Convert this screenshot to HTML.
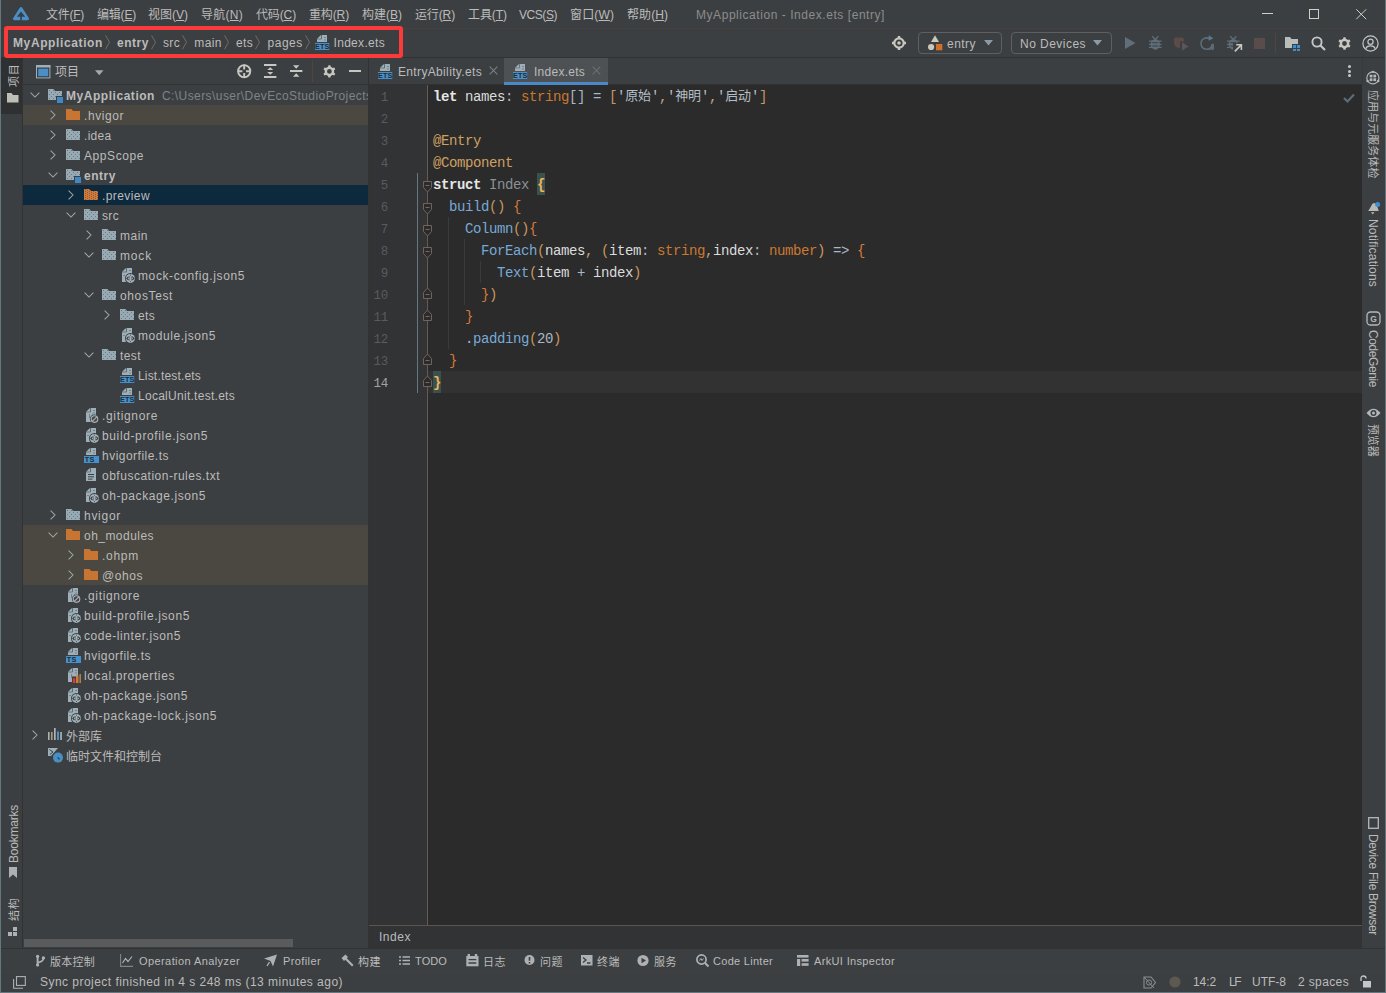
<!DOCTYPE html>
<html><head><meta charset="utf-8"><title>MyApplication - Index.ets [entry]</title>
<style>
html,body{margin:0;padding:0;background:#3c3f41;}
body{width:1386px;height:993px;position:relative;overflow:hidden;font-family:"Liberation Sans","Noto Sans CJK SC",sans-serif;font-size:12px;color:#bbbbbb;}
.t{position:absolute;white-space:pre;line-height:20px;height:20px;}
.m{font-family:"Liberation Mono","Noto Sans CJK SC",monospace;font-size:14px;letter-spacing:-0.4px;}
.c{position:relative}
.v{position:absolute;white-space:pre;line-height:20px;height:20px;transform-origin:0 0;}
svg{overflow:visible}
</style></head><body>
<div style="position:absolute;left:0px;top:0px;width:1386px;height:993px;background:#3c3f41;"></div>
<svg width="0" height="0" style="position:absolute"><defs><pattern id="dg" width="4" height="4" patternUnits="userSpaceOnUse"><rect width="4" height="4" fill="#98abb5"/><rect x="1" y="1" width="1" height="1" fill="#6b7b85"/><rect x="3" y="3" width="1" height="1" fill="#6b7b85"/></pattern><pattern id="do" width="4" height="2" patternUnits="userSpaceOnUse"><rect width="4" height="2" fill="#d27a3a"/><rect x="1" y="0" width="1" height="1" fill="#8a5a3a"/><rect x="3" y="1" width="1" height="1" fill="#8a5a3a"/></pattern></defs></svg>
<svg style="position:absolute;left:12px;top:6px" width="18" height="16" viewBox="0 0 18 16"><path d="M9 2.5 L2.4 12.8 L15.6 12.8 Z" fill="#4b8fc9" stroke="#4b8fc9" stroke-width="2.8" stroke-linejoin="round"/><path d="M9 5.6 L4.8 10.8 L13.2 10.8 Z" fill="#3c3f41"/><rect x="8.2" y="8" width="1.6" height="7.5" fill="#3c3f41"/></svg>
<span id="t1" class="t " style="left:46px;top:5px;letter-spacing:-0.272px;"><span class="c" style="top:-0.5px">文件</span>(<u>F</u>)</span>
<span id="t2" class="t " style="left:97px;top:5px;letter-spacing:-0.206px;"><span class="c" style="top:-0.5px">编辑</span>(<u>E</u>)</span>
<span id="t3" class="t " style="left:148px;top:5px;letter-spacing:-0.006px;"><span class="c" style="top:-0.5px">视图</span>(<u>V</u>)</span>
<span id="t4" class="t " style="left:201px;top:5px;letter-spacing:0.263px;"><span class="c" style="top:-0.5px">导航</span>(<u>N</u>)</span>
<span id="t5" class="t " style="left:256px;top:5px;letter-spacing:-0.138px;"><span class="c" style="top:-0.5px">代码</span>(<u>C</u>)</span>
<span id="t6" class="t " style="left:309px;top:5px;letter-spacing:-0.138px;"><span class="c" style="top:-0.5px">重构</span>(<u>R</u>)</span>
<span id="t7" class="t " style="left:362px;top:5px;letter-spacing:-0.006px;"><span class="c" style="top:-0.5px">构建</span>(<u>B</u>)</span>
<span id="t8" class="t " style="left:415px;top:5px;letter-spacing:-0.138px;"><span class="c" style="top:-0.5px">运行</span>(<u>R</u>)</span>
<span id="t9" class="t " style="left:468px;top:5px;letter-spacing:-0.072px;"><span class="c" style="top:-0.5px">工具</span>(<u>T</u>)</span>
<span id="t10" class="t " style="left:519px;top:5px;letter-spacing:-0.448px;">VCS(<u>S</u>)</span>
<span id="t11" class="t " style="left:570px;top:5px;letter-spacing:0.131px;"><span class="c" style="top:-0.5px">窗口</span>(<u>W</u>)</span>
<span id="t12" class="t " style="left:627px;top:5px;letter-spacing:0.062px;"><span class="c" style="top:-0.5px">帮助</span>(<u>H</u>)</span>
<span id="t13" class="t " style="left:696px;top:5px;color:#8c8c8c;letter-spacing:0.553px;">MyApplication - Index.ets [entry]</span>
<div style="position:absolute;left:1262px;top:13px;width:10.5px;height:1px;background:#d0d0c6;"></div>
<div style="position:absolute;left:1309px;top:9px;width:10px;height:10px;background:transparent;border:1px solid #d0d0c6;box-sizing:border-box;"></div>
<svg style="position:absolute;left:1355.5px;top:9px" width="10.5" height="10.5" viewBox="0 0 10.5 10.5"><path d="M0.3 0.3 L10.2 10.2 M10.2 0.3 L0.3 10.2" stroke="#d0d0c6" stroke-width="1" fill="none"/></svg>
<div style="position:absolute;left:0px;top:57px;width:1386px;height:1px;background:#323232;"></div>
<div style="position:absolute;left:0px;top:28px;width:1386px;height:1px;background:#46413f;"></div>
<span id="t14" class="t " style="left:13px;top:33px;font-weight:bold;letter-spacing:0.614px;">MyApplication</span>
<svg style="position:absolute;left:105.2px;top:35px" width="5" height="15" viewBox="0 0 5 15"><path d="M0.5 0.3 L4.5 7.2 L0.5 14.2" stroke="#716b68" stroke-width="1" fill="none"/></svg>
<span id="t15" class="t " style="left:117px;top:33px;font-weight:bold;letter-spacing:0.531px;">entry</span>
<svg style="position:absolute;left:151.2px;top:35px" width="5" height="15" viewBox="0 0 5 15"><path d="M0.5 0.3 L4.5 7.2 L0.5 14.2" stroke="#716b68" stroke-width="1" fill="none"/></svg>
<span id="t16" class="t " style="left:163px;top:33px;letter-spacing:0.333px;">src</span>
<svg style="position:absolute;left:182.3px;top:35px" width="5" height="15" viewBox="0 0 5 15"><path d="M0.5 0.3 L4.5 7.2 L0.5 14.2" stroke="#716b68" stroke-width="1" fill="none"/></svg>
<span id="t17" class="t " style="left:194.3px;top:33px;letter-spacing:0.371px;">main</span>
<svg style="position:absolute;left:224.3px;top:35px" width="5" height="15" viewBox="0 0 5 15"><path d="M0.5 0.3 L4.5 7.2 L0.5 14.2" stroke="#716b68" stroke-width="1" fill="none"/></svg>
<span id="t18" class="t " style="left:236px;top:33px;letter-spacing:0.328px;">ets</span>
<svg style="position:absolute;left:255px;top:35px" width="5" height="15" viewBox="0 0 5 15"><path d="M0.5 0.3 L4.5 7.2 L0.5 14.2" stroke="#716b68" stroke-width="1" fill="none"/></svg>
<span id="t19" class="t " style="left:267.5px;top:33px;letter-spacing:0.519px;">pages</span>
<svg style="position:absolute;left:304.8px;top:35px" width="5" height="15" viewBox="0 0 5 15"><path d="M0.5 0.3 L4.5 7.2 L0.5 14.2" stroke="#716b68" stroke-width="1" fill="none"/></svg>
<svg style="position:absolute;left:315.3px;top:34px" width="15" height="16" viewBox="0 0 15 16"><path d="M2 4.7 L6 1 L6 4.7 Z" fill="#9dafb8"/><path d="M6.6 1 H12 V8 H2 V5.3 H6.6 Z" fill="#9dafb8"/><rect x="9.5" y="3" width="1" height="1" fill="#4a555b"/><rect x="9.5" y="5.5" width="1" height="1" fill="#4a555b"/><rect x="0" y="9" width="14.2" height="7" fill="#4591cd"/><text x="7.2" y="15.3" font-family="Liberation Sans,sans-serif" font-size="7.3" font-weight="bold" fill="#2b2b28" text-anchor="middle" letter-spacing="0.1">ETS</text></svg>
<span id="t20" class="t " style="left:333.5px;top:33px;letter-spacing:0.311px;">Index.ets</span>
<div style="position:absolute;left:4px;top:26px;width:399px;height:32px;background:transparent;border:4px solid #fd3a3a;border-radius:3px;box-sizing:border-box;"></div>
<svg style="position:absolute;left:892px;top:36px" width="14" height="14" viewBox="0 0 14 14"><circle cx="7" cy="7" r="4.7" stroke="#c8c8be" stroke-width="2.2" fill="none"/><circle cx="7" cy="7" r="1.8" fill="#c8c8be"/><path d="M7 0 V2 M7 12 V14 M0 7 H2 M12 7 H14" stroke="#c8c8be" stroke-width="2.4"/></svg>
<div style="position:absolute;left:918px;top:32px;width:84px;height:22px;background:transparent;border:1px solid #5e6060;border-radius:4px;box-sizing:border-box;"></div>
<svg style="position:absolute;left:927px;top:35px" width="16" height="16" viewBox="0 0 16 16"><path d="M8 0.3 L12 7 L4 7 Z" fill="#c8c8bc"/><circle cx="4.1" cy="12" r="3.1" fill="#c8c8bc"/><rect x="9" y="9" width="6.3" height="6.3" fill="#d0702b"/></svg>
<span id="t21" class="t " style="left:947px;top:34px;letter-spacing:0.463px;">entry</span>
<svg style="position:absolute;left:984px;top:40px" width="10" height="6" viewBox="0 0 10 6"><path d="M0 0 L9 0 L4.5 5.5 Z" fill="#8b9aa6"/></svg>
<div style="position:absolute;left:1011px;top:32px;width:101px;height:22px;background:transparent;border:1px solid #5e6060;border-radius:4px;box-sizing:border-box;"></div>
<span id="t22" class="t " style="left:1020px;top:34px;letter-spacing:0.464px;">No Devices</span>
<svg style="position:absolute;left:1093px;top:40px" width="10" height="6" viewBox="0 0 10 6"><path d="M0 0 L9 0 L4.5 5.5 Z" fill="#8b9aa6"/></svg>
<svg style="position:absolute;left:1125px;top:37px" width="11" height="12" viewBox="0 0 11 12"><path d="M0 0 L10.5 6 L0 12 Z" fill="#5f6e79"/></svg>
<svg style="position:absolute;left:1149px;top:36px" width="13" height="14" viewBox="0 0 13 14"><path d="M3.2 0.3 L6.3 3.4 L9.4 0.3" stroke="#5f6e79" stroke-width="1.3" fill="none"/><path d="M0 5.2 H12.6 M0 8.3 H12.6 M0 11.4 H12.6" stroke="#5f6e79" stroke-width="1.3"/><ellipse cx="6.3" cy="8.3" rx="4.6" ry="5.4" fill="#5f6e79"/><path d="M3.3 6.7 H9.3 M3.3 10 H9.3" stroke="#3c3f41" stroke-width="1"/></svg>
<svg style="position:absolute;left:1174px;top:37px" width="15" height="14" viewBox="0 0 15 14"><path d="M1 0.5 H8 Q10 0.5 10 3 V4.5 L6 4.5 L6 11 H4.5 Q0 10 0 6 V1.5 Z" fill="#5b4b49"/><path d="M8 5.2 L14.6 9.4 L8 13.4 Z" fill="#5f5457"/></svg>
<svg style="position:absolute;left:1200px;top:35px" width="15" height="16" viewBox="0 0 15 16"><path d="M12.3 8.8 A5.7 5.7 0 1 1 9 3.4" stroke="#5f6e79" stroke-width="1.6" fill="none"/><path d="M8.6 0.2 L13.4 3.2 L8.6 5.8 Z" fill="#5b7890"/><path d="M8 14.8 L14 14.8 L14 8.6 Z" fill="#5f6a70"/></svg>
<svg style="position:absolute;left:1227px;top:36px" width="13" height="14" viewBox="0 0 13 14"><path d="M3.2 0.3 L6.3 3.4 L9.4 0.3" stroke="#5f6e79" stroke-width="1.3" fill="none"/><path d="M0 5.2 H12.6 M0 8.3 H12.6 M0 11.4 H12.6" stroke="#5f6e79" stroke-width="1.3"/><ellipse cx="6.3" cy="8.3" rx="4.6" ry="5.4" fill="#5f6e79"/><path d="M3.3 6.7 H9.3 M3.3 10 H9.3" stroke="#3c3f41" stroke-width="1"/></svg>
<svg style="position:absolute;left:1233px;top:42.5px" width="9.5" height="9.5" viewBox="0 0 9.5 9.5"><rect x="0" y="0" width="9.5" height="9.5" fill="#3c3f41"/><path d="M1.8 8.4 L7.6 2.6 M3.2 1.8 H8.4 V7" stroke="#c4c8c0" stroke-width="1.6" fill="none"/></svg>
<div style="position:absolute;left:1254px;top:38px;width:10.5px;height:10.5px;background:#594c4b;"></div>
<div style="position:absolute;left:1275px;top:33px;width:1px;height:20px;background:#52453f;"></div>
<svg style="position:absolute;left:1285px;top:36px" width="15" height="15" viewBox="0 0 15 15"><path d="M0 1 H5 L6.5 3 H13 V8 H7 V12 H0 Z" fill="#b9bdb9"/><rect x="8" y="9" width="3" height="3" fill="#3d8fd1"/><rect x="12" y="9" width="3" height="3" fill="#3d8fd1"/><rect x="8" y="13" width="3" height="2" fill="#3d8fd1"/><rect x="12" y="13" width="3" height="2" fill="#3d8fd1"/></svg>
<svg style="position:absolute;left:1311px;top:36px" width="15" height="15" viewBox="0 0 15 15"><circle cx="6" cy="6" r="4.6" stroke="#c4c6c8" stroke-width="1.9" fill="none"/><path d="M9.5 9.5 L14 14" stroke="#c4c6c8" stroke-width="2.2"/></svg>
<svg style="position:absolute;left:1338px;top:37px" width="13" height="13" viewBox="0 0 14 14"><circle cx="7" cy="7" r="3.9" stroke="#c6c7c0" stroke-width="2.6" fill="none"/><path d="M5.3 3 L5.9 0.2 H8.1 L8.7 3 Z" fill="#c6c7c0" transform="rotate(0 7 7)"/><path d="M5.3 3 L5.9 0.2 H8.1 L8.7 3 Z" fill="#c6c7c0" transform="rotate(60 7 7)"/><path d="M5.3 3 L5.9 0.2 H8.1 L8.7 3 Z" fill="#c6c7c0" transform="rotate(120 7 7)"/><path d="M5.3 3 L5.9 0.2 H8.1 L8.7 3 Z" fill="#c6c7c0" transform="rotate(180 7 7)"/><path d="M5.3 3 L5.9 0.2 H8.1 L8.7 3 Z" fill="#c6c7c0" transform="rotate(240 7 7)"/><path d="M5.3 3 L5.9 0.2 H8.1 L8.7 3 Z" fill="#c6c7c0" transform="rotate(300 7 7)"/></svg>
<svg style="position:absolute;left:1362px;top:35px" width="17" height="17" viewBox="0 0 17 17"><circle cx="8.5" cy="8.5" r="7.6" stroke="#c4c6c8" stroke-width="1.2" fill="none"/><circle cx="8.5" cy="6.8" r="2.6" stroke="#c4c6c8" stroke-width="1.2" fill="none"/><path d="M3.8 13.8 Q4.5 10.8 8.5 10.8 Q12.5 10.8 13.2 13.8" stroke="#c4c6c8" stroke-width="1.2" fill="none"/></svg>
<div style="position:absolute;left:1px;top:58px;width:21px;height:56px;background:#2e3032;"></div>
<div style="position:absolute;left:22px;top:58px;width:1px;height:891px;background:#323232;"></div>
<span id="t23" class="v" style="left:4px;top:87.3px;transform:rotate(-90deg);font-size:11px;letter-spacing:0.750px;">项目</span>
<svg style="position:absolute;left:7px;top:93px" width="12" height="10" viewBox="0 0 12 10"><path d="M0 0 H4.5 L6 2 H11.5 V9.5 H0 Z" fill="#bdbfb6"/></svg>
<span id="t24" class="v" style="left:4px;top:863px;transform:rotate(-90deg);letter-spacing:-0.226px;">Bookmarks</span>
<svg style="position:absolute;left:9px;top:867px" width="8" height="11" viewBox="0 0 8 11"><path d="M0 0 H8 V11 L4 7.5 L0 11 Z" fill="#aeb1b3"/></svg>
<span id="t25" class="v" style="left:4px;top:921px;transform:rotate(-90deg);font-size:11px;letter-spacing:0.750px;">结构</span>
<svg style="position:absolute;left:8px;top:927px" width="10" height="9" viewBox="0 0 10 9"><rect x="5" y="0" width="4" height="4" fill="#aeb1b3"/><rect x="0" y="5" width="4" height="4" fill="#aeb1b3"/><rect x="5" y="5" width="4" height="4" fill="#aeb1b3"/></svg>
<svg style="position:absolute;left:36px;top:65px" width="14.4" height="13.4" viewBox="0 0 14.4 13.4"><rect x="0.5" y="0.5" width="13.4" height="12.4" fill="#3c3f41" stroke="#9db0ba" stroke-width="1"/><rect x="0" y="0" width="14.4" height="2.5" fill="#9db0ba"/><rect x="2.2" y="3.7" width="10" height="7.5" fill="#4a90c8"/></svg>
<span id="t26" class="t " style="left:55px;top:61px;letter-spacing:-0.008px;"><span class="c" style="top:1px">项目</span></span>
<svg style="position:absolute;left:95px;top:69.8px" width="9" height="6" viewBox="0 0 9 6"><path d="M0 0.3 L8.5 0.3 L4.25 5.3 Z" fill="#a6a8aa"/></svg>
<svg style="position:absolute;left:237px;top:64px" width="14.4" height="14.4" viewBox="0 0 14.4 14.4"><circle cx="7.2" cy="7.2" r="6.1" stroke="#c6c7c0" stroke-width="1.9" fill="none"/><path d="M7.2 0.6 V5.4 M7.2 9 V13.8 M0.6 7.2 H5.4 M9 7.2 H13.8" stroke="#c6c7c0" stroke-width="1.9"/></svg>
<svg style="position:absolute;left:264px;top:64px" width="12.4" height="14" viewBox="0 0 12.4 14"><path d="M0 1 H12.4 M0 13 H12.4" stroke="#c6c7c0" stroke-width="2"/><path d="M6.2 3.2 L9.2 6 H3.2 Z M6.2 10.8 L9.2 8 H3.2 Z" fill="#c6c7c0"/></svg>
<svg style="position:absolute;left:290px;top:64px" width="12.4" height="14" viewBox="0 0 12.4 14"><path d="M0 7 H12.4" stroke="#c6c7c0" stroke-width="2"/><path d="M6.2 4.8 L9.4 1.2 H3 Z M6.2 9.2 L9.4 12.8 H3 Z" fill="#c6c7c0"/></svg>
<div style="position:absolute;left:312px;top:61px;width:1px;height:21px;background:#52453f;"></div>
<svg style="position:absolute;left:322.5px;top:64.5px" width="12.8" height="12.8" viewBox="0 0 14 14"><circle cx="7" cy="7" r="3.9" stroke="#c6c7c0" stroke-width="2.6" fill="none"/><path d="M5.3 3 L5.9 0.2 H8.1 L8.7 3 Z" fill="#c6c7c0" transform="rotate(0 7 7)"/><path d="M5.3 3 L5.9 0.2 H8.1 L8.7 3 Z" fill="#c6c7c0" transform="rotate(60 7 7)"/><path d="M5.3 3 L5.9 0.2 H8.1 L8.7 3 Z" fill="#c6c7c0" transform="rotate(120 7 7)"/><path d="M5.3 3 L5.9 0.2 H8.1 L8.7 3 Z" fill="#c6c7c0" transform="rotate(180 7 7)"/><path d="M5.3 3 L5.9 0.2 H8.1 L8.7 3 Z" fill="#c6c7c0" transform="rotate(240 7 7)"/><path d="M5.3 3 L5.9 0.2 H8.1 L8.7 3 Z" fill="#c6c7c0" transform="rotate(300 7 7)"/></svg>
<div style="position:absolute;left:349px;top:70px;width:12px;height:2px;background:#c6c7c0;"></div>
<div style="position:absolute;left:23px;top:84px;width:345px;height:1px;background:#323232;"></div>
<div style="position:absolute;left:368px;top:58px;width:1px;height:891px;background:#323232;"></div>
<div style="position:absolute;left:23px;top:105px;width:345px;height:20px;background:#4a4840;"></div>
<div style="position:absolute;left:23px;top:185px;width:345px;height:20px;background:#0d293e;"></div>
<div style="position:absolute;left:23px;top:525px;width:345px;height:20px;background:#4a4840;"></div>
<div style="position:absolute;left:23px;top:545px;width:345px;height:20px;background:#4a4840;"></div>
<div style="position:absolute;left:23px;top:565px;width:345px;height:20px;background:#4a4840;"></div>
<svg style="position:absolute;left:30px;top:92px" width="10" height="6" viewBox="0 0 10 6"><path d="M0.6 0.6 L5 5 L9.4 0.6" stroke="#9ca6ab" stroke-width="1.05" fill="none"/></svg>
<svg style="position:absolute;left:48px;top:89px" width="16" height="15" viewBox="0 0 16 15"><path d="M0 0 H5.5 L7 2 H14 V7 H8 V11 H0 Z" fill="url(#dg)"/><rect x="9" y="8" width="6" height="6" fill="#3d8ac6"/></svg>
<span id="t27" class="t " style="left:66px;top:86px;font-weight:bold;letter-spacing:0.537px;">MyApplication</span>
<div style="position:absolute;left:162px;top:85px;width:206px;height:20px;overflow:hidden"><span id="tpath" class="t" style="left:0;top:1px;color:#7f8386;letter-spacing:0.42px">C:\Users\user\DevEcoStudioProjects\MyApplication</span></div>
<svg style="position:absolute;left:50px;top:110px" width="6" height="10" viewBox="0 0 6 10"><path d="M0.6 0.6 L5 5 L0.6 9.4" stroke="#9ca6ab" stroke-width="1.05" fill="none"/></svg>
<svg style="position:absolute;left:66px;top:109px" width="14" height="11" viewBox="0 0 14 11"><path d="M0 0 H5.5 L7 2 H14 V11 H0 Z" fill="#c87533"/></svg>
<span id="t28" class="t " style="left:84px;top:106px;letter-spacing:0.567px;">.hvigor</span>
<svg style="position:absolute;left:50px;top:130px" width="6" height="10" viewBox="0 0 6 10"><path d="M0.6 0.6 L5 5 L0.6 9.4" stroke="#9ca6ab" stroke-width="1.05" fill="none"/></svg>
<svg style="position:absolute;left:66px;top:129px" width="14" height="11" viewBox="0 0 14 11"><path d="M0 0 H5.5 L7 2 H14 V11 H0 Z" fill="url(#dg)"/></svg>
<span id="t29" class="t " style="left:84px;top:126px;letter-spacing:0.294px;">.idea</span>
<svg style="position:absolute;left:50px;top:150px" width="6" height="10" viewBox="0 0 6 10"><path d="M0.6 0.6 L5 5 L0.6 9.4" stroke="#9ca6ab" stroke-width="1.05" fill="none"/></svg>
<svg style="position:absolute;left:66px;top:149px" width="14" height="11" viewBox="0 0 14 11"><path d="M0 0 H5.5 L7 2 H14 V11 H0 Z" fill="url(#dg)"/></svg>
<span id="t30" class="t " style="left:84px;top:146px;letter-spacing:0.576px;">AppScope</span>
<svg style="position:absolute;left:48px;top:172px" width="10" height="6" viewBox="0 0 10 6"><path d="M0.6 0.6 L5 5 L9.4 0.6" stroke="#9ca6ab" stroke-width="1.05" fill="none"/></svg>
<svg style="position:absolute;left:66px;top:169px" width="16" height="15" viewBox="0 0 16 15"><path d="M0 0 H5.5 L7 2 H14 V7 H8 V11 H0 Z" fill="url(#dg)"/><rect x="9" y="8" width="6" height="6" fill="#3d8ac6"/></svg>
<span id="t31" class="t " style="left:84px;top:166px;font-weight:bold;letter-spacing:0.531px;">entry</span>
<svg style="position:absolute;left:68px;top:190px" width="6" height="10" viewBox="0 0 6 10"><path d="M0.6 0.6 L5 5 L0.6 9.4" stroke="#9ca6ab" stroke-width="1.05" fill="none"/></svg>
<svg style="position:absolute;left:84px;top:189px" width="14" height="11" viewBox="0 0 14 11"><path d="M0 0 H5.5 L7 2 H14 V11 H0 Z" fill="url(#do)"/></svg>
<span id="t32" class="t " style="left:102px;top:186px;letter-spacing:0.414px;">.preview</span>
<svg style="position:absolute;left:66px;top:212px" width="10" height="6" viewBox="0 0 10 6"><path d="M0.6 0.6 L5 5 L9.4 0.6" stroke="#9ca6ab" stroke-width="1.05" fill="none"/></svg>
<svg style="position:absolute;left:84px;top:209px" width="14" height="11" viewBox="0 0 14 11"><path d="M0 0 H5.5 L7 2 H14 V11 H0 Z" fill="url(#dg)"/></svg>
<span id="t33" class="t " style="left:102px;top:206px;letter-spacing:0.333px;">src</span>
<svg style="position:absolute;left:86px;top:230px" width="6" height="10" viewBox="0 0 6 10"><path d="M0.6 0.6 L5 5 L0.6 9.4" stroke="#9ca6ab" stroke-width="1.05" fill="none"/></svg>
<svg style="position:absolute;left:102px;top:229px" width="14" height="11" viewBox="0 0 14 11"><path d="M0 0 H5.5 L7 2 H14 V11 H0 Z" fill="url(#dg)"/></svg>
<span id="t34" class="t " style="left:120px;top:226px;letter-spacing:0.496px;">main</span>
<svg style="position:absolute;left:84px;top:252px" width="10" height="6" viewBox="0 0 10 6"><path d="M0.6 0.6 L5 5 L9.4 0.6" stroke="#9ca6ab" stroke-width="1.05" fill="none"/></svg>
<svg style="position:absolute;left:102px;top:249px" width="14" height="11" viewBox="0 0 14 11"><path d="M0 0 H5.5 L7 2 H14 V11 H0 Z" fill="url(#dg)"/></svg>
<span id="t35" class="t " style="left:120px;top:246px;letter-spacing:0.832px;">mock</span>
<svg style="position:absolute;left:120px;top:267px" width="16" height="16" viewBox="0 0 16 16"><path d="M2 4.7 L6 1 L6 4.7 Z" fill="#9dafb8"/><path d="M6.6 1 H12 V15 H2 V5.3 H6.6 Z" fill="#9dafb8"/><rect x="9.5" y="3" width="1" height="1" fill="#4a555b"/><rect x="3.5" y="8" width="1" height="1" fill="#4a555b"/><circle cx="10.4" cy="11.4" r="5.4" fill="#3c3f41"/><circle cx="10.4" cy="11.4" r="4.5" fill="#a7b6be"/><path d="M8.6 9.6 L6.9 11.4 L8.6 13.2 M12.2 9.6 L13.9 11.4 L12.2 13.2" stroke="#3c3f41" stroke-width="1.2" fill="none"/><path d="M10.4 7.6 V8.6 M10.4 14.2 V15.2" stroke="#3c3f41" stroke-width="1"/><path d="M9.4 9 V13.8 M11.4 9 V13.8" stroke="#5b676e" stroke-width="0.7"/></svg>
<span id="t36" class="t " style="left:138px;top:266px;letter-spacing:0.605px;">mock-config.json5</span>
<svg style="position:absolute;left:84px;top:292px" width="10" height="6" viewBox="0 0 10 6"><path d="M0.6 0.6 L5 5 L9.4 0.6" stroke="#9ca6ab" stroke-width="1.05" fill="none"/></svg>
<svg style="position:absolute;left:102px;top:289px" width="14" height="11" viewBox="0 0 14 11"><path d="M0 0 H5.5 L7 2 H14 V11 H0 Z" fill="url(#dg)"/></svg>
<span id="t37" class="t " style="left:120px;top:286px;letter-spacing:0.621px;">ohosTest</span>
<svg style="position:absolute;left:104px;top:310px" width="6" height="10" viewBox="0 0 6 10"><path d="M0.6 0.6 L5 5 L0.6 9.4" stroke="#9ca6ab" stroke-width="1.05" fill="none"/></svg>
<svg style="position:absolute;left:120px;top:309px" width="14" height="11" viewBox="0 0 14 11"><path d="M0 0 H5.5 L7 2 H14 V11 H0 Z" fill="url(#dg)"/></svg>
<span id="t38" class="t " style="left:138px;top:306px;letter-spacing:0.328px;">ets</span>
<svg style="position:absolute;left:120px;top:327px" width="16" height="16" viewBox="0 0 16 16"><path d="M2 4.7 L6 1 L6 4.7 Z" fill="#9dafb8"/><path d="M6.6 1 H12 V15 H2 V5.3 H6.6 Z" fill="#9dafb8"/><rect x="9.5" y="3" width="1" height="1" fill="#4a555b"/><rect x="3.5" y="8" width="1" height="1" fill="#4a555b"/><circle cx="10.4" cy="11.4" r="5.4" fill="#3c3f41"/><circle cx="10.4" cy="11.4" r="4.5" fill="#a7b6be"/><path d="M8.6 9.6 L6.9 11.4 L8.6 13.2 M12.2 9.6 L13.9 11.4 L12.2 13.2" stroke="#3c3f41" stroke-width="1.2" fill="none"/><path d="M10.4 7.6 V8.6 M10.4 14.2 V15.2" stroke="#3c3f41" stroke-width="1"/><path d="M9.4 9 V13.8 M11.4 9 V13.8" stroke="#5b676e" stroke-width="0.7"/></svg>
<span id="t39" class="t " style="left:138px;top:326px;letter-spacing:0.551px;">module.json5</span>
<svg style="position:absolute;left:84px;top:352px" width="10" height="6" viewBox="0 0 10 6"><path d="M0.6 0.6 L5 5 L9.4 0.6" stroke="#9ca6ab" stroke-width="1.05" fill="none"/></svg>
<svg style="position:absolute;left:102px;top:349px" width="14" height="11" viewBox="0 0 14 11"><path d="M0 0 H5.5 L7 2 H14 V11 H0 Z" fill="url(#dg)"/></svg>
<span id="t40" class="t " style="left:120px;top:346px;letter-spacing:0.414px;">test</span>
<svg style="position:absolute;left:120px;top:367px" width="15" height="16" viewBox="0 0 15 16"><path d="M2 4.7 L6 1 L6 4.7 Z" fill="#9dafb8"/><path d="M6.6 1 H12 V8 H2 V5.3 H6.6 Z" fill="#9dafb8"/><rect x="9.5" y="3" width="1" height="1" fill="#4a555b"/><rect x="9.5" y="5.5" width="1" height="1" fill="#4a555b"/><rect x="0" y="9" width="14.2" height="7" fill="#4591cd"/><text x="7.2" y="15.3" font-family="Liberation Sans,sans-serif" font-size="7.3" font-weight="bold" fill="#2b2b28" text-anchor="middle" letter-spacing="0.1">ETS</text></svg>
<span id="t41" class="t " style="left:138px;top:366px;letter-spacing:0.177px;">List.test.ets</span>
<svg style="position:absolute;left:120px;top:387px" width="15" height="16" viewBox="0 0 15 16"><path d="M2 4.7 L6 1 L6 4.7 Z" fill="#9dafb8"/><path d="M6.6 1 H12 V8 H2 V5.3 H6.6 Z" fill="#9dafb8"/><rect x="9.5" y="3" width="1" height="1" fill="#4a555b"/><rect x="9.5" y="5.5" width="1" height="1" fill="#4a555b"/><rect x="0" y="9" width="14.2" height="7" fill="#4591cd"/><text x="7.2" y="15.3" font-family="Liberation Sans,sans-serif" font-size="7.3" font-weight="bold" fill="#2b2b28" text-anchor="middle" letter-spacing="0.1">ETS</text></svg>
<span id="t42" class="t " style="left:138px;top:386px;letter-spacing:0.275px;">LocalUnit.test.ets</span>
<svg style="position:absolute;left:84px;top:407px" width="16" height="16" viewBox="0 0 16 16"><path d="M2 4.7 L6 1 L6 4.7 Z" fill="#9dafb8"/><path d="M6.6 1 H12 V15 H2 V5.3 H6.6 Z" fill="#9dafb8"/><rect x="9.5" y="3" width="1" height="1" fill="#4a555b"/><rect x="9.5" y="5.5" width="1" height="1" fill="#4a555b"/><rect x="5" y="7.5" width="1" height="1" fill="#4a555b"/><rect x="8" y="7.5" width="1" height="1" fill="#4a555b"/><rect x="5" y="9.5" width="1" height="1" fill="#4a555b"/><circle cx="10.5" cy="12.1" r="4.6" fill="#3c3f41"/><circle cx="10.5" cy="12.1" r="3.3" fill="#4c4541" stroke="#a7b6be" stroke-width="1.1"/><path d="M8.2 14.4 L12.8 9.8" stroke="#a7b6be" stroke-width="1.1"/></svg>
<span id="t43" class="t " style="left:102px;top:406px;letter-spacing:0.662px;">.gitignore</span>
<svg style="position:absolute;left:84px;top:427px" width="16" height="16" viewBox="0 0 16 16"><path d="M2 4.7 L6 1 L6 4.7 Z" fill="#9dafb8"/><path d="M6.6 1 H12 V15 H2 V5.3 H6.6 Z" fill="#9dafb8"/><rect x="9.5" y="3" width="1" height="1" fill="#4a555b"/><rect x="3.5" y="8" width="1" height="1" fill="#4a555b"/><circle cx="10.4" cy="11.4" r="5.4" fill="#3c3f41"/><circle cx="10.4" cy="11.4" r="4.5" fill="#a7b6be"/><path d="M8.6 9.6 L6.9 11.4 L8.6 13.2 M12.2 9.6 L13.9 11.4 L12.2 13.2" stroke="#3c3f41" stroke-width="1.2" fill="none"/><path d="M10.4 7.6 V8.6 M10.4 14.2 V15.2" stroke="#3c3f41" stroke-width="1"/><path d="M9.4 9 V13.8 M11.4 9 V13.8" stroke="#5b676e" stroke-width="0.7"/></svg>
<span id="t44" class="t " style="left:102px;top:426px;letter-spacing:0.628px;">build-profile.json5</span>
<svg style="position:absolute;left:84px;top:447px" width="16" height="16" viewBox="0 0 16 16"><path d="M2 4.7 L6 1 L6 4.7 Z" fill="#9dafb8"/><path d="M6.6 1 H12 V8 H2 V5.3 H6.6 Z" fill="#9dafb8"/><rect x="9.5" y="3" width="1" height="1" fill="#4a555b"/><rect x="9.5" y="5.5" width="1" height="1" fill="#4a555b"/><rect x="0" y="9" width="15" height="7" fill="#4591cd"/><text x="5.6" y="15.3" font-family="Liberation Sans,sans-serif" font-size="7.3" font-weight="bold" fill="#2b2b28" text-anchor="middle" letter-spacing="0.1">TS</text></svg>
<span id="t45" class="t " style="left:102px;top:446px;letter-spacing:0.484px;">hvigorfile.ts</span>
<svg style="position:absolute;left:84px;top:467px" width="16" height="16" viewBox="0 0 16 16"><path d="M2 4.7 L6 1 L6 4.7 Z" fill="#9dafb8"/><path d="M6.6 1 H12 V14 H2 V5.3 H6.6 Z" fill="#9dafb8"/><path d="M4 7.5 H10 M4 9.8 H10 M4 12.1 H8.5" stroke="#3c3f41" stroke-width="1"/></svg>
<span id="t46" class="t " style="left:102px;top:466px;letter-spacing:0.505px;">obfuscation-rules.txt</span>
<svg style="position:absolute;left:84px;top:487px" width="16" height="16" viewBox="0 0 16 16"><path d="M2 4.7 L6 1 L6 4.7 Z" fill="#9dafb8"/><path d="M6.6 1 H12 V15 H2 V5.3 H6.6 Z" fill="#9dafb8"/><rect x="9.5" y="3" width="1" height="1" fill="#4a555b"/><rect x="3.5" y="8" width="1" height="1" fill="#4a555b"/><circle cx="10.4" cy="11.4" r="5.4" fill="#3c3f41"/><circle cx="10.4" cy="11.4" r="4.5" fill="#a7b6be"/><path d="M8.6 9.6 L6.9 11.4 L8.6 13.2 M12.2 9.6 L13.9 11.4 L12.2 13.2" stroke="#3c3f41" stroke-width="1.2" fill="none"/><path d="M10.4 7.6 V8.6 M10.4 14.2 V15.2" stroke="#3c3f41" stroke-width="1"/><path d="M9.4 9 V13.8 M11.4 9 V13.8" stroke="#5b676e" stroke-width="0.7"/></svg>
<span id="t47" class="t " style="left:102px;top:486px;letter-spacing:0.579px;">oh-package.json5</span>
<svg style="position:absolute;left:50px;top:510px" width="6" height="10" viewBox="0 0 6 10"><path d="M0.6 0.6 L5 5 L0.6 9.4" stroke="#9ca6ab" stroke-width="1.05" fill="none"/></svg>
<svg style="position:absolute;left:66px;top:509px" width="14" height="11" viewBox="0 0 14 11"><path d="M0 0 H5.5 L7 2 H14 V11 H0 Z" fill="url(#dg)"/></svg>
<span id="t48" class="t " style="left:84px;top:506px;letter-spacing:0.719px;">hvigor</span>
<svg style="position:absolute;left:48px;top:532px" width="10" height="6" viewBox="0 0 10 6"><path d="M0.6 0.6 L5 5 L9.4 0.6" stroke="#9ca6ab" stroke-width="1.05" fill="none"/></svg>
<svg style="position:absolute;left:66px;top:529px" width="14" height="11" viewBox="0 0 14 11"><path d="M0 0 H5.5 L7 2 H14 V11 H0 Z" fill="#c87533"/></svg>
<span id="t49" class="t " style="left:84px;top:526px;letter-spacing:0.461px;">oh_modules</span>
<svg style="position:absolute;left:68px;top:550px" width="6" height="10" viewBox="0 0 6 10"><path d="M0.6 0.6 L5 5 L0.6 9.4" stroke="#9ca6ab" stroke-width="1.05" fill="none"/></svg>
<svg style="position:absolute;left:84px;top:549px" width="14" height="11" viewBox="0 0 14 11"><path d="M0 0 H5.5 L7 2 H14 V11 H0 Z" fill="#c87533"/></svg>
<span id="t50" class="t " style="left:102px;top:546px;letter-spacing:0.728px;">.ohpm</span>
<svg style="position:absolute;left:68px;top:570px" width="6" height="10" viewBox="0 0 6 10"><path d="M0.6 0.6 L5 5 L0.6 9.4" stroke="#9ca6ab" stroke-width="1.05" fill="none"/></svg>
<svg style="position:absolute;left:84px;top:569px" width="14" height="11" viewBox="0 0 14 11"><path d="M0 0 H5.5 L7 2 H14 V11 H0 Z" fill="#c87533"/></svg>
<span id="t51" class="t " style="left:102px;top:566px;letter-spacing:0.559px;">@ohos</span>
<svg style="position:absolute;left:66px;top:587px" width="16" height="16" viewBox="0 0 16 16"><path d="M2 4.7 L6 1 L6 4.7 Z" fill="#9dafb8"/><path d="M6.6 1 H12 V15 H2 V5.3 H6.6 Z" fill="#9dafb8"/><rect x="9.5" y="3" width="1" height="1" fill="#4a555b"/><rect x="9.5" y="5.5" width="1" height="1" fill="#4a555b"/><rect x="5" y="7.5" width="1" height="1" fill="#4a555b"/><rect x="8" y="7.5" width="1" height="1" fill="#4a555b"/><rect x="5" y="9.5" width="1" height="1" fill="#4a555b"/><circle cx="10.5" cy="12.1" r="4.6" fill="#3c3f41"/><circle cx="10.5" cy="12.1" r="3.3" fill="#4c4541" stroke="#a7b6be" stroke-width="1.1"/><path d="M8.2 14.4 L12.8 9.8" stroke="#a7b6be" stroke-width="1.1"/></svg>
<span id="t52" class="t " style="left:84px;top:586px;letter-spacing:0.662px;">.gitignore</span>
<svg style="position:absolute;left:66px;top:607px" width="16" height="16" viewBox="0 0 16 16"><path d="M2 4.7 L6 1 L6 4.7 Z" fill="#9dafb8"/><path d="M6.6 1 H12 V15 H2 V5.3 H6.6 Z" fill="#9dafb8"/><rect x="9.5" y="3" width="1" height="1" fill="#4a555b"/><rect x="3.5" y="8" width="1" height="1" fill="#4a555b"/><circle cx="10.4" cy="11.4" r="5.4" fill="#3c3f41"/><circle cx="10.4" cy="11.4" r="4.5" fill="#a7b6be"/><path d="M8.6 9.6 L6.9 11.4 L8.6 13.2 M12.2 9.6 L13.9 11.4 L12.2 13.2" stroke="#3c3f41" stroke-width="1.2" fill="none"/><path d="M10.4 7.6 V8.6 M10.4 14.2 V15.2" stroke="#3c3f41" stroke-width="1"/><path d="M9.4 9 V13.8 M11.4 9 V13.8" stroke="#5b676e" stroke-width="0.7"/></svg>
<span id="t53" class="t " style="left:84px;top:606px;letter-spacing:0.628px;">build-profile.json5</span>
<svg style="position:absolute;left:66px;top:627px" width="16" height="16" viewBox="0 0 16 16"><path d="M2 4.7 L6 1 L6 4.7 Z" fill="#9dafb8"/><path d="M6.6 1 H12 V15 H2 V5.3 H6.6 Z" fill="#9dafb8"/><rect x="9.5" y="3" width="1" height="1" fill="#4a555b"/><rect x="3.5" y="8" width="1" height="1" fill="#4a555b"/><circle cx="10.4" cy="11.4" r="5.4" fill="#3c3f41"/><circle cx="10.4" cy="11.4" r="4.5" fill="#a7b6be"/><path d="M8.6 9.6 L6.9 11.4 L8.6 13.2 M12.2 9.6 L13.9 11.4 L12.2 13.2" stroke="#3c3f41" stroke-width="1.2" fill="none"/><path d="M10.4 7.6 V8.6 M10.4 14.2 V15.2" stroke="#3c3f41" stroke-width="1"/><path d="M9.4 9 V13.8 M11.4 9 V13.8" stroke="#5b676e" stroke-width="0.7"/></svg>
<span id="t54" class="t " style="left:84px;top:626px;letter-spacing:0.565px;">code-linter.json5</span>
<svg style="position:absolute;left:66px;top:647px" width="16" height="16" viewBox="0 0 16 16"><path d="M2 4.7 L6 1 L6 4.7 Z" fill="#9dafb8"/><path d="M6.6 1 H12 V8 H2 V5.3 H6.6 Z" fill="#9dafb8"/><rect x="9.5" y="3" width="1" height="1" fill="#4a555b"/><rect x="9.5" y="5.5" width="1" height="1" fill="#4a555b"/><rect x="0" y="9" width="15" height="7" fill="#4591cd"/><text x="5.6" y="15.3" font-family="Liberation Sans,sans-serif" font-size="7.3" font-weight="bold" fill="#2b2b28" text-anchor="middle" letter-spacing="0.1">TS</text></svg>
<span id="t55" class="t " style="left:84px;top:646px;letter-spacing:0.484px;">hvigorfile.ts</span>
<svg style="position:absolute;left:66px;top:667px" width="17" height="16" viewBox="0 0 17 16"><path d="M2 4.7 L6 1 L6 4.7 Z" fill="#9dafb8"/><path d="M6.6 1 H12 V15 H2 V5.3 H6.6 Z" fill="#9dafb8"/><rect x="9.5" y="3" width="1" height="1" fill="#4a555b"/><rect x="9.5" y="5.5" width="1" height="1" fill="#4a555b"/><rect x="5" y="7.5" width="1" height="1" fill="#4a555b"/><rect x="5" y="9.5" width="1" height="1" fill="#4a555b"/><rect x="6" y="9.5" width="10" height="6.5" fill="#3c3f41"/><rect x="7" y="11.3" width="2.2" height="4.7" fill="#f0352f"/><rect x="10" y="8.5" width="2.5" height="7.5" fill="#cf7d36"/><rect x="13.4" y="7" width="1.6" height="9" fill="#a8834f"/></svg>
<span id="t56" class="t " style="left:84px;top:666px;letter-spacing:0.602px;">local.properties</span>
<svg style="position:absolute;left:66px;top:687px" width="16" height="16" viewBox="0 0 16 16"><path d="M2 4.7 L6 1 L6 4.7 Z" fill="#9dafb8"/><path d="M6.6 1 H12 V15 H2 V5.3 H6.6 Z" fill="#9dafb8"/><rect x="9.5" y="3" width="1" height="1" fill="#4a555b"/><rect x="3.5" y="8" width="1" height="1" fill="#4a555b"/><circle cx="10.4" cy="11.4" r="5.4" fill="#3c3f41"/><circle cx="10.4" cy="11.4" r="4.5" fill="#a7b6be"/><path d="M8.6 9.6 L6.9 11.4 L8.6 13.2 M12.2 9.6 L13.9 11.4 L12.2 13.2" stroke="#3c3f41" stroke-width="1.2" fill="none"/><path d="M10.4 7.6 V8.6 M10.4 14.2 V15.2" stroke="#3c3f41" stroke-width="1"/><path d="M9.4 9 V13.8 M11.4 9 V13.8" stroke="#5b676e" stroke-width="0.7"/></svg>
<span id="t57" class="t " style="left:84px;top:686px;letter-spacing:0.579px;">oh-package.json5</span>
<svg style="position:absolute;left:66px;top:707px" width="16" height="16" viewBox="0 0 16 16"><path d="M2 4.7 L6 1 L6 4.7 Z" fill="#9dafb8"/><path d="M6.6 1 H12 V15 H2 V5.3 H6.6 Z" fill="#9dafb8"/><rect x="9.5" y="3" width="1" height="1" fill="#4a555b"/><rect x="3.5" y="8" width="1" height="1" fill="#4a555b"/><circle cx="10.4" cy="11.4" r="5.4" fill="#3c3f41"/><circle cx="10.4" cy="11.4" r="4.5" fill="#a7b6be"/><path d="M8.6 9.6 L6.9 11.4 L8.6 13.2 M12.2 9.6 L13.9 11.4 L12.2 13.2" stroke="#3c3f41" stroke-width="1.2" fill="none"/><path d="M10.4 7.6 V8.6 M10.4 14.2 V15.2" stroke="#3c3f41" stroke-width="1"/><path d="M9.4 9 V13.8 M11.4 9 V13.8" stroke="#5b676e" stroke-width="0.7"/></svg>
<span id="t58" class="t " style="left:84px;top:706px;letter-spacing:0.615px;">oh-package-lock.json5</span>
<svg style="position:absolute;left:32px;top:730px" width="6" height="10" viewBox="0 0 6 10"><path d="M0.6 0.6 L5 5 L0.6 9.4" stroke="#9ca6ab" stroke-width="1.05" fill="none"/></svg>
<svg style="position:absolute;left:48px;top:728px" width="15" height="12" viewBox="0 0 15 12"><rect x="0" y="4" width="1.6" height="8" fill="#a7b3ba"/><rect x="3" y="4" width="1.6" height="8" fill="#b89763"/><rect x="6" y="0" width="1.7" height="12" fill="#a7b3ba"/><rect x="9" y="3.5" width="2" height="8.5" fill="#4d8fc4"/><rect x="12.2" y="4" width="1.7" height="8" fill="#a7b3ba"/></svg>
<span id="t59" class="t " style="left:66px;top:726px;letter-spacing:-0.005px;"><span class="c" style="top:0.5px">外部库</span></span>
<svg style="position:absolute;left:48px;top:747px" width="16" height="16" viewBox="0 0 16 16"><path d="M0 1 H10 L3 9 H0 Z" fill="#9dafb8"/><path d="M1.5 2.6 L5 5 L1.8 7.5" stroke="#3c3f41" stroke-width="1" fill="none"/><circle cx="10" cy="10.6" r="5.6" fill="#3c3f41"/><circle cx="10" cy="10.6" r="5" fill="#4a8fc4"/><path d="M9.6 10.4 L11.6 12.4" stroke="#2f3a44" stroke-width="1.2"/></svg>
<span id="t60" class="t " style="left:66px;top:746px;letter-spacing:-0.002px;"><span class="c" style="top:0.5px">临时文件和控制台</span></span>
<div style="position:absolute;left:24px;top:939px;width:269px;height:8px;background:#595b5d;"></div>
<div style="position:absolute;left:369px;top:84px;width:993px;height:1px;background:#323232;"></div>
<div style="position:absolute;left:504px;top:58px;width:104px;height:24px;background:#4d5153;"></div>
<div style="position:absolute;left:504px;top:82px;width:104px;height:3px;background:#4a88c7;"></div>
<svg style="position:absolute;left:378px;top:63px" width="15" height="16" viewBox="0 0 15 16"><path d="M2 4.7 L6 1 L6 4.7 Z" fill="#9dafb8"/><path d="M6.6 1 H12 V8 H2 V5.3 H6.6 Z" fill="#9dafb8"/><rect x="9.5" y="3" width="1" height="1" fill="#4a555b"/><rect x="9.5" y="5.5" width="1" height="1" fill="#4a555b"/><rect x="0" y="9" width="14.2" height="7" fill="#4591cd"/><text x="7.2" y="15.3" font-family="Liberation Sans,sans-serif" font-size="7.3" font-weight="bold" fill="#2b2b28" text-anchor="middle" letter-spacing="0.1">ETS</text></svg>
<span id="t61" class="t " style="left:398px;top:62px;letter-spacing:0.346px;">EntryAbility.ets</span>
<svg style="position:absolute;left:489px;top:66px" width="9" height="9" viewBox="0 0 9 9"><path d="M0.7 0.7 L8.3 8.3 M8.3 0.7 L0.7 8.3" stroke="#7d8082" stroke-width="1.1" fill="none"/></svg>
<svg style="position:absolute;left:513px;top:63px" width="15" height="16" viewBox="0 0 15 16"><path d="M2 4.7 L6 1 L6 4.7 Z" fill="#9dafb8"/><path d="M6.6 1 H12 V8 H2 V5.3 H6.6 Z" fill="#9dafb8"/><rect x="9.5" y="3" width="1" height="1" fill="#4a555b"/><rect x="9.5" y="5.5" width="1" height="1" fill="#4a555b"/><rect x="0" y="9" width="14.2" height="7" fill="#4591cd"/><text x="7.2" y="15.3" font-family="Liberation Sans,sans-serif" font-size="7.3" font-weight="bold" fill="#2b2b28" text-anchor="middle" letter-spacing="0.1">ETS</text></svg>
<span id="t62" class="t " style="left:534px;top:62px;letter-spacing:0.255px;">Index.ets</span>
<svg style="position:absolute;left:592px;top:66px" width="9" height="9" viewBox="0 0 9 9"><path d="M0.7 0.7 L8.3 8.3 M8.3 0.7 L0.7 8.3" stroke="#6c6f71" stroke-width="1.1" fill="none"/></svg>
<div style="position:absolute;left:1348px;top:65.2px;width:3px;height:3px;background:#c4c6c8;border-radius:1.5px;"></div>
<div style="position:absolute;left:1348px;top:69.6px;width:3px;height:3px;background:#c4c6c8;border-radius:1.5px;"></div>
<div style="position:absolute;left:1348px;top:74px;width:3px;height:3px;background:#c4c6c8;border-radius:1.5px;"></div>
<div style="position:absolute;left:369px;top:85px;width:59px;height:840px;background:#313335;"></div>
<div style="position:absolute;left:428px;top:85px;width:934.3px;height:840px;background:#2b2b2b;"></div>
<div style="position:absolute;left:428px;top:371px;width:934.3px;height:22px;background:#323232;"></div>
<div style="position:absolute;left:427px;top:85px;width:1px;height:840px;background:#665a55;"></div>
<div style="position:absolute;left:417px;top:173px;width:1px;height:220px;background:#687680;"></div>
<svg style="position:absolute;left:1343px;top:92.7px" width="12" height="10" viewBox="0 0 12 10"><path d="M1 5 L4.5 8.5 L11 1.5" stroke="#5b6d7a" stroke-width="2.2" fill="none"/></svg>
<div style="position:absolute;left:448px;top:217px;width:1px;height:132px;background:#393c3e;"></div>
<div style="position:absolute;left:464px;top:239px;width:1px;height:66px;background:#393c3e;"></div>
<div style="position:absolute;left:480px;top:261px;width:1px;height:22px;background:#393c3e;"></div>
<span class="t m" style="left:433px;top:86px;line-height:22px;height:22px;color:#e6e6e6;font-weight:bold;">let</span>
<span class="t m" style="left:465px;top:86px;line-height:22px;height:22px;color:#dcdcdc;">names</span>
<span class="t m" style="left:505px;top:86px;line-height:22px;height:22px;color:#a9b7c6;">:</span>
<span class="t m" style="left:521px;top:86px;line-height:22px;height:22px;color:#cc7832;">string</span>
<span class="t m" style="left:569px;top:86px;line-height:22px;height:22px;color:#a9b7c6;">[]</span>
<span class="t m" style="left:593px;top:86px;line-height:22px;height:22px;color:#a9b7c6;">=</span>
<span class="t m" style="left:609px;top:86px;line-height:22px;height:22px;color:#c9965f;">[</span>
<span class="t m" style="left:617px;top:86px;line-height:22px;height:22px;color:#b3bfc7;">&#x27;</span>
<span class="t m" style="left:625px;top:86px;line-height:22px;height:22px;color:#b3bfc7;width:26px;text-align:center;font-size:13px;letter-spacing:-0.2px">原始</span>
<span class="t m" style="left:651px;top:86px;line-height:22px;height:22px;color:#b3bfc7;">&#x27;</span>
<span class="t m" style="left:659px;top:86px;line-height:22px;height:22px;color:#c0a27c;">,</span>
<span class="t m" style="left:667px;top:86px;line-height:22px;height:22px;color:#b3bfc7;">&#x27;</span>
<span class="t m" style="left:675px;top:86px;line-height:22px;height:22px;color:#b3bfc7;width:26px;text-align:center;font-size:13px;letter-spacing:-0.2px">神明</span>
<span class="t m" style="left:701px;top:86px;line-height:22px;height:22px;color:#b3bfc7;">&#x27;</span>
<span class="t m" style="left:709px;top:86px;line-height:22px;height:22px;color:#c0a27c;">,</span>
<span class="t m" style="left:717px;top:86px;line-height:22px;height:22px;color:#b3bfc7;">&#x27;</span>
<span class="t m" style="left:725px;top:86px;line-height:22px;height:22px;color:#b3bfc7;width:26px;text-align:center;font-size:13px;letter-spacing:-0.2px">启动</span>
<span class="t m" style="left:751px;top:86px;line-height:22px;height:22px;color:#b3bfc7;">&#x27;</span>
<span class="t m" style="left:759px;top:86px;line-height:22px;height:22px;color:#c9965f;">]</span>
<span class="t m" style="left:433px;top:130px;line-height:22px;height:22px;color:#cfa062;">@Entry</span>
<span class="t m" style="left:433px;top:152px;line-height:22px;height:22px;color:#cfa062;">@Component</span>
<div style="position:absolute;left:537px;top:173px;width:8px;height:22px;background:#3b514d;"></div>
<span class="t m" style="left:433px;top:174px;line-height:22px;height:22px;color:#e6e6e6;font-weight:bold;">struct</span>
<span class="t m" style="left:489px;top:174px;line-height:22px;height:22px;color:#8a9096;">Index</span>
<span class="t m" style="left:537px;top:174px;line-height:22px;height:22px;color:#e9b45e;font-weight:bold;">{</span>
<span class="t m" style="left:449px;top:196px;line-height:22px;height:22px;color:#78a9d6;">build</span>
<span class="t m" style="left:489px;top:196px;line-height:22px;height:22px;color:#c9965f;">()</span>
<span class="t m" style="left:513px;top:196px;line-height:22px;height:22px;color:#d9783a;">{</span>
<span class="t m" style="left:465px;top:218px;line-height:22px;height:22px;color:#78a9d6;">Column</span>
<span class="t m" style="left:513px;top:218px;line-height:22px;height:22px;color:#c9965f;">()</span>
<span class="t m" style="left:529px;top:218px;line-height:22px;height:22px;color:#d9783a;">{</span>
<span class="t m" style="left:481px;top:240px;line-height:22px;height:22px;color:#78a9d6;">ForEach</span>
<span class="t m" style="left:537px;top:240px;line-height:22px;height:22px;color:#c9965f;">(</span>
<span class="t m" style="left:545px;top:240px;line-height:22px;height:22px;color:#dcdcdc;">names</span>
<span class="t m" style="left:585px;top:240px;line-height:22px;height:22px;color:#c0a27c;">,</span>
<span class="t m" style="left:601px;top:240px;line-height:22px;height:22px;color:#c9965f;">(</span>
<span class="t m" style="left:609px;top:240px;line-height:22px;height:22px;color:#dcdcdc;">item</span>
<span class="t m" style="left:641px;top:240px;line-height:22px;height:22px;color:#a9b7c6;">:</span>
<span class="t m" style="left:657px;top:240px;line-height:22px;height:22px;color:#cc7832;">string</span>
<span class="t m" style="left:705px;top:240px;line-height:22px;height:22px;color:#c0a27c;">,</span>
<span class="t m" style="left:713px;top:240px;line-height:22px;height:22px;color:#dcdcdc;">index</span>
<span class="t m" style="left:753px;top:240px;line-height:22px;height:22px;color:#a9b7c6;">:</span>
<span class="t m" style="left:769px;top:240px;line-height:22px;height:22px;color:#cc7832;">number</span>
<span class="t m" style="left:817px;top:240px;line-height:22px;height:22px;color:#c9965f;">)</span>
<span class="t m" style="left:833px;top:240px;line-height:22px;height:22px;color:#a9b7c6;">=&gt;</span>
<span class="t m" style="left:857px;top:240px;line-height:22px;height:22px;color:#d9783a;">{</span>
<span class="t m" style="left:497px;top:262px;line-height:22px;height:22px;color:#78a9d6;">Text</span>
<span class="t m" style="left:529px;top:262px;line-height:22px;height:22px;color:#c9965f;">(</span>
<span class="t m" style="left:537px;top:262px;line-height:22px;height:22px;color:#dcdcdc;">item</span>
<span class="t m" style="left:577px;top:262px;line-height:22px;height:22px;color:#a9b7c6;">+</span>
<span class="t m" style="left:593px;top:262px;line-height:22px;height:22px;color:#dcdcdc;">index</span>
<span class="t m" style="left:633px;top:262px;line-height:22px;height:22px;color:#c9965f;">)</span>
<span class="t m" style="left:481px;top:284px;line-height:22px;height:22px;color:#d9783a;">}</span>
<span class="t m" style="left:489px;top:284px;line-height:22px;height:22px;color:#c9965f;">)</span>
<span class="t m" style="left:465px;top:306px;line-height:22px;height:22px;color:#d9783a;">}</span>
<span class="t m" style="left:465px;top:328px;line-height:22px;height:22px;color:#a9b7c6;">.</span>
<span class="t m" style="left:473px;top:328px;line-height:22px;height:22px;color:#78a9d6;">padding</span>
<span class="t m" style="left:529px;top:328px;line-height:22px;height:22px;color:#c9965f;">(</span>
<span class="t m" style="left:537px;top:328px;line-height:22px;height:22px;color:#a9b7c6;">20</span>
<span class="t m" style="left:553px;top:328px;line-height:22px;height:22px;color:#c9965f;">)</span>
<span class="t m" style="left:449px;top:350px;line-height:22px;height:22px;color:#d9783a;">}</span>
<div style="position:absolute;left:433px;top:371px;width:8px;height:22px;background:#3b514d;"></div>
<span class="t m" style="left:433px;top:372px;line-height:22px;height:22px;color:#e9b45e;font-weight:bold;">}</span>
<span class="t m" style="left:360px;width:27.8px;text-align:right;font-size:12.5px;letter-spacing:-0.4px;top:86.5px;line-height:22px;height:22px;color:#585c5f;">1</span>
<span class="t m" style="left:360px;width:27.8px;text-align:right;font-size:12.5px;letter-spacing:-0.4px;top:108.5px;line-height:22px;height:22px;color:#585c5f;">2</span>
<span class="t m" style="left:360px;width:27.8px;text-align:right;font-size:12.5px;letter-spacing:-0.4px;top:130.5px;line-height:22px;height:22px;color:#585c5f;">3</span>
<span class="t m" style="left:360px;width:27.8px;text-align:right;font-size:12.5px;letter-spacing:-0.4px;top:152.5px;line-height:22px;height:22px;color:#585c5f;">4</span>
<span class="t m" style="left:360px;width:27.8px;text-align:right;font-size:12.5px;letter-spacing:-0.4px;top:174.5px;line-height:22px;height:22px;color:#585c5f;">5</span>
<span class="t m" style="left:360px;width:27.8px;text-align:right;font-size:12.5px;letter-spacing:-0.4px;top:196.5px;line-height:22px;height:22px;color:#585c5f;">6</span>
<span class="t m" style="left:360px;width:27.8px;text-align:right;font-size:12.5px;letter-spacing:-0.4px;top:218.5px;line-height:22px;height:22px;color:#585c5f;">7</span>
<span class="t m" style="left:360px;width:27.8px;text-align:right;font-size:12.5px;letter-spacing:-0.4px;top:240.5px;line-height:22px;height:22px;color:#585c5f;">8</span>
<span class="t m" style="left:360px;width:27.8px;text-align:right;font-size:12.5px;letter-spacing:-0.4px;top:262.5px;line-height:22px;height:22px;color:#585c5f;">9</span>
<span class="t m" style="left:360px;width:27.8px;text-align:right;font-size:12.5px;letter-spacing:-0.4px;top:284.5px;line-height:22px;height:22px;color:#585c5f;">10</span>
<span class="t m" style="left:360px;width:27.8px;text-align:right;font-size:12.5px;letter-spacing:-0.4px;top:306.5px;line-height:22px;height:22px;color:#585c5f;">11</span>
<span class="t m" style="left:360px;width:27.8px;text-align:right;font-size:12.5px;letter-spacing:-0.4px;top:328.5px;line-height:22px;height:22px;color:#585c5f;">12</span>
<span class="t m" style="left:360px;width:27.8px;text-align:right;font-size:12.5px;letter-spacing:-0.4px;top:350.5px;line-height:22px;height:22px;color:#585c5f;">13</span>
<span class="t m" style="left:360px;width:27.8px;text-align:right;font-size:12.5px;letter-spacing:-0.4px;top:372.5px;line-height:22px;height:22px;color:#a4a3a3;">14</span>
<svg style="position:absolute;left:423px;top:180.5px" width="9" height="12" viewBox="0 0 9 12"><path d="M0.5 0.5 H8.5 V6.5 L4.5 11 L0.5 6.5 Z" fill="#2b2b2b" stroke="#70625c" stroke-width="1"/><path d="M2.5 4.5 H6.5" stroke="#75675f" stroke-width="1"/></svg>
<svg style="position:absolute;left:423px;top:202.5px" width="9" height="12" viewBox="0 0 9 12"><path d="M0.5 0.5 H8.5 V6.5 L4.5 11 L0.5 6.5 Z" fill="#2b2b2b" stroke="#70625c" stroke-width="1"/><path d="M2.5 4.5 H6.5" stroke="#75675f" stroke-width="1"/></svg>
<svg style="position:absolute;left:423px;top:224.5px" width="9" height="12" viewBox="0 0 9 12"><path d="M0.5 0.5 H8.5 V6.5 L4.5 11 L0.5 6.5 Z" fill="#2b2b2b" stroke="#70625c" stroke-width="1"/><path d="M2.5 4.5 H6.5" stroke="#75675f" stroke-width="1"/></svg>
<svg style="position:absolute;left:423px;top:246.5px" width="9" height="12" viewBox="0 0 9 12"><path d="M0.5 0.5 H8.5 V6.5 L4.5 11 L0.5 6.5 Z" fill="#2b2b2b" stroke="#70625c" stroke-width="1"/><path d="M2.5 4.5 H6.5" stroke="#75675f" stroke-width="1"/></svg>
<svg style="position:absolute;left:423px;top:287px" width="9" height="12" viewBox="0 0 9 12"><path d="M0.5 11.5 H8.5 V5.5 L4.5 1 L0.5 5.5 Z" fill="#2b2b2b" stroke="#70625c" stroke-width="1"/><path d="M2.5 7.5 H6.5" stroke="#75675f" stroke-width="1"/></svg>
<svg style="position:absolute;left:423px;top:309px" width="9" height="12" viewBox="0 0 9 12"><path d="M0.5 11.5 H8.5 V5.5 L4.5 1 L0.5 5.5 Z" fill="#2b2b2b" stroke="#70625c" stroke-width="1"/><path d="M2.5 7.5 H6.5" stroke="#75675f" stroke-width="1"/></svg>
<svg style="position:absolute;left:423px;top:353px" width="9" height="12" viewBox="0 0 9 12"><path d="M0.5 11.5 H8.5 V5.5 L4.5 1 L0.5 5.5 Z" fill="#2b2b2b" stroke="#70625c" stroke-width="1"/><path d="M2.5 7.5 H6.5" stroke="#75675f" stroke-width="1"/></svg>
<svg style="position:absolute;left:423px;top:375px" width="9" height="12" viewBox="0 0 9 12"><path d="M0.5 11.5 H8.5 V5.5 L4.5 1 L0.5 5.5 Z" fill="#2b2b2b" stroke="#70625c" stroke-width="1"/><path d="M2.5 7.5 H6.5" stroke="#75675f" stroke-width="1"/></svg>
<div style="position:absolute;left:369px;top:925px;width:993px;height:23px;background:#313335;"></div>
<div style="position:absolute;left:369px;top:924.5px;width:993px;height:1px;background:#5f534f;"></div>
<span id="t63" class="t " style="left:379px;top:927px;letter-spacing:0.528px;">Index</span>
<div style="position:absolute;left:1362px;top:58px;width:23px;height:891px;background:#3c3f41;"></div>
<div style="position:absolute;left:1361.5px;top:58px;width:1px;height:27px;background:#37393b;"></div>
<svg style="position:absolute;left:1366.2px;top:71.2px" width="13.8" height="13.8" viewBox="0 0 15 15"><circle cx="7.5" cy="7.5" r="6.6" stroke="#b4b8bb" stroke-width="1.3" fill="none"/><rect x="4" y="4" width="3" height="3" fill="#b4b8bb"/><rect x="8" y="4" width="3" height="3" fill="#b4b8bb"/><rect x="4" y="8" width="3" height="3" fill="#b4b8bb"/><rect x="8" y="8" width="3" height="3" fill="#b4b8bb"/><circle cx="7.5" cy="0.9" r="1.3" fill="#b4b8bb"/><circle cx="1.7" cy="10.8" r="1.3" fill="#b4b8bb"/><circle cx="13.3" cy="10.8" r="1.3" fill="#b4b8bb"/></svg>
<span id="t64" class="v" style="left:1383px;top:90px;transform:rotate(90deg);font-size:11px;letter-spacing:0.062px;">应用与元服务体检</span>
<svg style="position:absolute;left:1367px;top:201px" width="13" height="15" viewBox="0 0 13 15"><path d="M1.2 10 Q3.5 6.5 5 3.5 Q6.5 1 8.5 2.5 Q10.5 5.5 11.8 10 Z" fill="#b9bbb2"/><path d="M4 11.3 H7.5 L5.7 13.6 Z" fill="#b9bbb2"/><circle cx="10.6" cy="3.6" r="2.5" fill="#3d8fd1"/></svg>
<span id="t65" class="v" style="left:1383px;top:219px;transform:rotate(90deg);letter-spacing:0.202px;">Notifications</span>
<svg style="position:absolute;left:1366px;top:311px" width="15" height="15" viewBox="0 0 15 15"><rect x="1" y="1" width="13" height="13" rx="3.5" stroke="#b4b8bb" stroke-width="1.3" fill="none"/><text x="7.5" y="10.6" font-family="Liberation Sans,sans-serif" font-weight="bold" font-size="8.5" text-anchor="middle" fill="#b4b8bb">G</text></svg>
<span id="t66" class="v" style="left:1383px;top:330px;transform:rotate(90deg);letter-spacing:-0.413px;">CodeGenie</span>
<svg style="position:absolute;left:1366px;top:408px" width="15" height="10" viewBox="0 0 15 10"><path d="M0.5 5 Q7.5 -3.5 14.5 5 Q7.5 13.5 0.5 5 Z" fill="#b4b8bb"/><circle cx="7.5" cy="5" r="3" fill="#3c3f41"/><circle cx="7.5" cy="5" r="1.5" fill="#b4b8bb"/></svg>
<span id="t67" class="v" style="left:1383px;top:424px;transform:rotate(90deg);font-size:11px;letter-spacing:-0.167px;">预览器</span>
<svg style="position:absolute;left:1368px;top:817px" width="11" height="12" viewBox="0 0 11 12"><rect x="0.7" y="0.7" width="9.6" height="10.6" stroke="#b4b8bb" stroke-width="1.3" fill="none"/></svg>
<span id="t68" class="v" style="left:1383px;top:834px;transform:rotate(90deg);letter-spacing:-0.300px;">Device File Browser</span>
<div style="position:absolute;left:0px;top:948px;width:1386px;height:1px;background:#323232;"></div>
<div style="position:absolute;left:0px;top:971px;width:1386px;height:1px;background:#433f3e;"></div>
<svg style="position:absolute;left:35px;top:954px" width="13" height="13" viewBox="0 0 13 13"><path d="M2.6 2 V11.2" stroke="#aeb1b3" stroke-width="1.9" fill="none"/><path d="M2.6 8.6 Q8.2 8 8.3 4.6" stroke="#aeb1b3" stroke-width="1.7" fill="none"/><circle cx="2.6" cy="2.3" r="1.6" fill="#aeb1b3"/><circle cx="2.6" cy="11" r="1.6" fill="#aeb1b3"/><circle cx="8.4" cy="3.9" r="1.7" fill="#aeb1b3"/></svg>
<span id="t69" class="t " style="left:50px;top:951px;font-size:11px;letter-spacing:0.250px;"><span class="c" style="top:0.5px">版本控制</span></span>
<svg style="position:absolute;left:120px;top:954px" width="13" height="13" viewBox="0 0 13 13"><path d="M0.6 0 V12.4 H13" stroke="#7f8588" stroke-width="1.1" fill="none"/><path d="M2.5 9 L5.5 4.5 L8 7.5 L12 2.5" stroke="#aeb1b3" stroke-width="1.2" fill="none"/></svg>
<span id="t70" class="t " style="left:139px;top:951px;font-size:11px;letter-spacing:0.413px;">Operation Analyzer</span>
<svg style="position:absolute;left:264px;top:954px" width="13" height="13" viewBox="0 0 13 13"><path d="M0 4.5 L13 0.5 L9 12.5 L6.5 7 Z" fill="#aeb1b3"/><path d="M3 12 L5.5 8" stroke="#aeb1b3" stroke-width="1.4"/></svg>
<span id="t71" class="t " style="left:283px;top:951px;font-size:11px;letter-spacing:0.395px;">Profiler</span>
<svg style="position:absolute;left:341px;top:954px" width="13" height="13" viewBox="0 0 13 13"><path d="M0.5 4 L4.5 0.5 L7 3 L5.8 4.3 L12.5 11 L11 12.5 L4.3 5.8 L3 7 Z" fill="#aeb1b3"/></svg>
<span id="t72" class="t " style="left:358px;top:951px;font-size:11px;letter-spacing:0.500px;"><span class="c" style="top:0.5px">构建</span></span>
<svg style="position:absolute;left:399px;top:954px" width="13" height="13" viewBox="0 0 13 13"><path d="M0 3 H2 M0 6.5 H2 M0 10 H2 M3.5 3 H11 M3.5 6.5 H11 M3.5 10 H11" stroke="#aeb1b3" stroke-width="1.7"/></svg>
<span id="t73" class="t " style="left:415px;top:951px;font-size:11px;letter-spacing:0.105px;">TODO</span>
<svg style="position:absolute;left:466px;top:954px" width="13" height="13" viewBox="0 0 13 13"><rect x="0.3" y="2" width="12.2" height="10.3" fill="#aeb1b3"/><rect x="1.6" y="0" width="2.4" height="3" fill="#aeb1b3"/><rect x="8.8" y="0" width="2.4" height="3" fill="#aeb1b3"/><path d="M2.5 5.6 H10.3 M2.5 9 H10.3" stroke="#3c3f41" stroke-width="1.4"/></svg>
<span id="t74" class="t " style="left:483px;top:951px;font-size:11px;letter-spacing:0.500px;"><span class="c" style="top:0.5px">日志</span></span>
<svg style="position:absolute;left:524px;top:954px" width="13" height="13" viewBox="0 0 13 13"><circle cx="5.5" cy="6" r="5" fill="#aeb1b3"/><path d="M5.5 3 V6.8 M5.5 8 V9.5" stroke="#3c3f41" stroke-width="1.6"/></svg>
<span id="t75" class="t " style="left:540px;top:951px;font-size:11px;letter-spacing:0.500px;"><span class="c" style="top:0.5px">问题</span></span>
<svg style="position:absolute;left:581px;top:954px" width="13" height="13" viewBox="0 0 13 13"><rect x="0" y="1" width="11.5" height="10.5" fill="#aeb1b3"/><path d="M2 3.5 L5 6 L2 8.5 M6 9 H9.5" stroke="#3c3f41" stroke-width="1.3" fill="none"/></svg>
<span id="t76" class="t " style="left:597px;top:951px;font-size:11px;letter-spacing:0.500px;"><span class="c" style="top:0.5px">终端</span></span>
<svg style="position:absolute;left:637px;top:954px" width="13" height="13" viewBox="0 0 13 13"><circle cx="6" cy="6.5" r="5.6" fill="#aeb1b3"/><path d="M4.5 3.8 L9 6.5 L4.5 9.2 Z" fill="#3c3f41"/></svg>
<span id="t77" class="t " style="left:654px;top:951px;font-size:11px;letter-spacing:0.500px;"><span class="c" style="top:0.5px">服务</span></span>
<svg style="position:absolute;left:696px;top:954px" width="13" height="13" viewBox="0 0 13 13"><circle cx="5.5" cy="5.5" r="4.6" stroke="#aeb1b3" stroke-width="1.7" fill="none"/><path d="M9 9 L12.5 12.5" stroke="#aeb1b3" stroke-width="2"/><path d="M3.5 6.5 L5 4.5 L6 6.5 L7.5 4.5" stroke="#aeb1b3" stroke-width="1" fill="none"/></svg>
<span id="t78" class="t " style="left:713px;top:951px;font-size:11px;letter-spacing:0.284px;">Code Linter</span>
<svg style="position:absolute;left:797px;top:954px" width="13" height="13" viewBox="0 0 13 13"><rect x="0" y="1" width="11.5" height="2.6" fill="#aeb1b3"/><rect x="0" y="5" width="3.2" height="7" fill="#aeb1b3"/><rect x="4.6" y="5" width="7" height="2.6" fill="#aeb1b3"/><rect x="4.6" y="9.2" width="7" height="2.6" fill="#aeb1b3"/></svg>
<span id="t79" class="t " style="left:814px;top:951px;font-size:11px;letter-spacing:0.346px;">ArkUI Inspector</span>
<svg style="position:absolute;left:13px;top:976px" width="13" height="13" viewBox="0 0 13 13"><rect x="3.5" y="0.6" width="8.8" height="8.8" stroke="#aeb1b3" stroke-width="1.1" fill="none"/><path d="M0.6 3 V12.2 H10" stroke="#aeb1b3" stroke-width="1.1" fill="none"/></svg>
<span id="t80" class="t " style="left:40px;top:972px;letter-spacing:0.465px;">Sync project finished in 4 s 248 ms (13 minutes ago)</span>
<svg style="position:absolute;left:1143px;top:976px" width="14" height="13" viewBox="0 0 14 13"><path d="M1 1 H8 L12.5 6.5 L8 12 H1 Z" stroke="#8a8d8f" stroke-width="1.1" fill="none"/><circle cx="6" cy="6.5" r="2.6" stroke="#8a8d8f" stroke-width="1" fill="none"/><path d="M1 1 L11 12" stroke="#8a8d8f" stroke-width="1"/></svg>
<svg style="position:absolute;left:1169px;top:976px" width="12" height="12" viewBox="0 0 12 12"><circle cx="6" cy="6" r="5.6" fill="#5d5951"/></svg>
<span id="t81" class="t " style="left:1193px;top:972px;letter-spacing:-0.090px;">14:2</span>
<span id="t82" class="t " style="left:1229px;top:972px;letter-spacing:-1.508px;">LF</span>
<span id="t83" class="t " style="left:1252px;top:972px;letter-spacing:0.000px;">UTF-8</span>
<span id="t84" class="t " style="left:1298px;top:972px;letter-spacing:0.371px;">2 spaces</span>
<svg style="position:absolute;left:1359px;top:975px" width="12" height="13" viewBox="0 0 12 13"><path d="M2 6 V3.5 Q2 1 4.5 1 Q7 1 7 3.5" stroke="#c4c6c8" stroke-width="1.3" fill="none"/><rect x="4" y="6" width="8" height="6.5" fill="#c4c6c8"/></svg>
<div style="position:absolute;left:0px;top:0px;width:1px;height:993px;background:#66767f;"></div>
<div style="position:absolute;left:1385px;top:0px;width:1px;height:993px;background:#66767f;"></div>
<div style="position:absolute;left:0px;top:991.6px;width:1386px;height:1.4px;background:#66767f;"></div>
</body></html>
